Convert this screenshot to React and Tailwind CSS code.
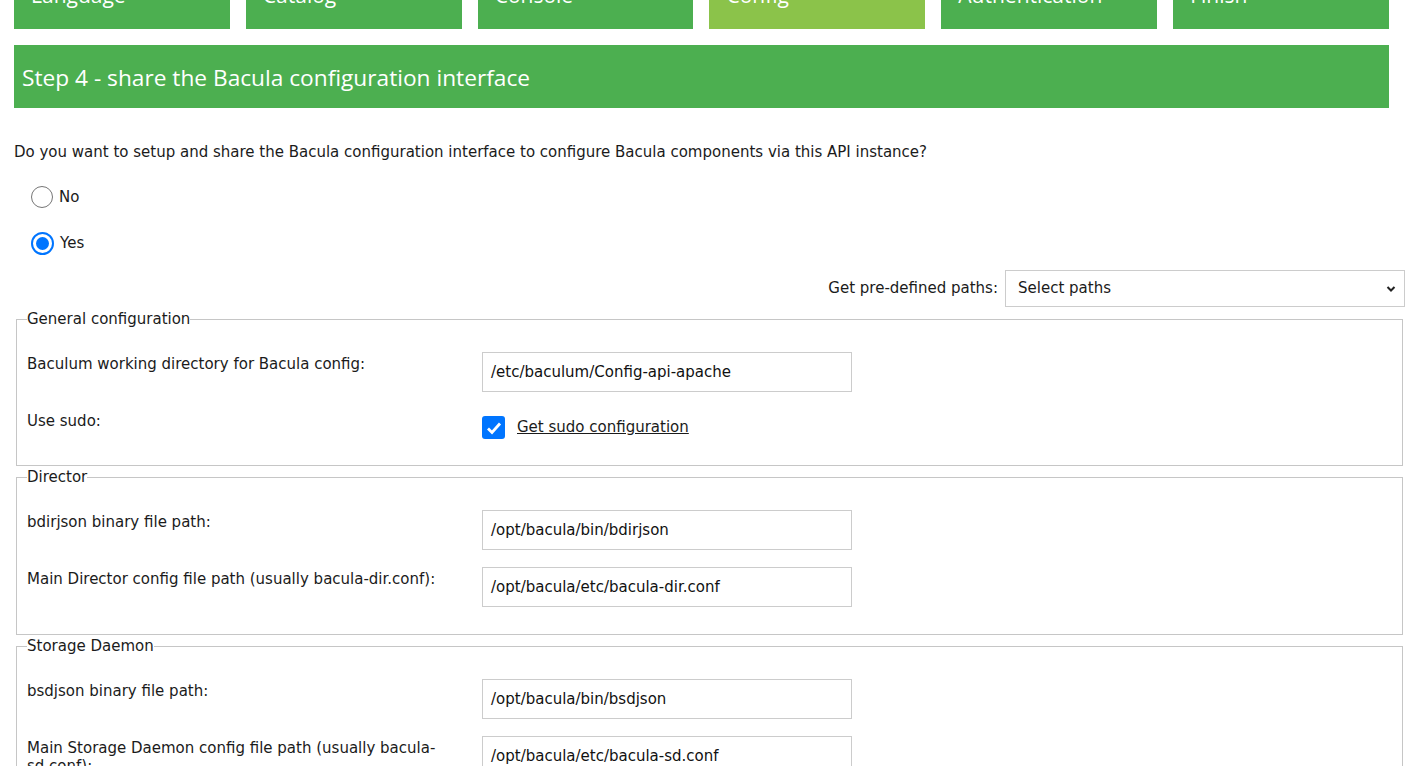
import React from "react";

const tabs = ["Language", "Catalog", "Console", "Config", "Authentication", "Finish"];

function Row({ label, value, children }) {
  return (
    <div className="flex items-start mb-[17px]">
      <div className="w-[455px] pr-[15px] pt-[3px] text-[15px] leading-[18px]">{label}</div>
      {children ? (
        children
      ) : (
        <div className="w-[370px] h-[40px] border border-[#cccccc] px-[8px] flex items-center text-[15px] text-[#111] bg-white">
          {value}
        </div>
      )}
    </div>
  );
}

function Fieldset({ title, children }) {
  return (
    <fieldset className="border border-[#c6c6c6] px-[10px] pb-[10px] mb-[2px]">
      <legend className="px-0 text-[15px] leading-[18px]">{title}</legend>
      <div className="pt-[24px]">{children}</div>
    </fieldset>
  );
}

export default function App() {
  return (
    <div className="min-h-screen bg-white text-[#1b1b1b] font-['DejaVu_Sans',Verdana,sans-serif] overflow-hidden">
      <div className="pl-[14px]">
        <div className="mt-[-31px] flex gap-[16px] w-[1375px]">
          {tabs.map((t, i) => (
            <div
              key={t}
              className={`w-[216px] h-[60px] pl-[17px] pt-[12px] text-white text-[21px] leading-[28px] font-['Open_Sans',sans-serif] ${
                i === 3 ? "bg-[#8bc34a]" : "bg-[#4caf50]"
              }`}
            >
              {t}
            </div>
          ))}
        </div>
        <div className="mt-[16px] w-[1375px] h-[63px] bg-[#4caf50] text-white flex items-center pl-[8px] pt-[3px] text-[22.7px] font-['Open_Sans',sans-serif]">
          Step 4 - share the Bacula configuration interface
        </div>

        <p className="mt-[34px] text-[15px] leading-[20px]">
          Do you want to setup and share the Bacula configuration interface to configure Bacula components via this API instance?
        </p>

        <div className="mt-[24px] pl-[17px] flex flex-col gap-[24px]">
          <label className="flex items-center gap-[6px] h-[22px] text-[15px]">
            <span className="w-[22px] h-[22px] rounded-full border border-[#767676] bg-white"></span>
            <span>No</span>
          </label>
          <label className="flex items-center gap-[6px] h-[22px] text-[15px]">
            <span className="w-[23px] h-[23px] rounded-full border-2 border-[#0075ff] bg-white flex items-center justify-center">
              <span className="w-[13px] h-[13px] rounded-full bg-[#0075ff]"></span>
            </span>
            <span>Yes</span>
          </label>
        </div>

        <div className="mt-[16px] w-[1391px] flex items-center justify-end gap-[7px] text-[15px]">
          <span>Get pre-defined paths:</span>
          <div className="w-[400px] h-[37px] border border-[#cccccc] flex items-center justify-between pl-[12px] pr-[8px] text-[15px] bg-white">
            <span>Select paths</span>
            <svg width="10" height="8" viewBox="0 0 10 8">
              <path d="M1.5 2 L5 5.5 L8.5 2" fill="none" stroke="#222" strokeWidth="2" />
            </svg>
          </div>
        </div>

        <div className="ml-[2px] w-[1387px] mt-[3px]">
          <Fieldset title="General configuration">
            <Row label="Baculum working directory for Bacula config:" value="/etc/baculum/Config-api-apache" />
            <div className="flex items-start mb-[17px] h-[29px]">
              <div className="w-[455px] pt-[3px] text-[15px] leading-[18px]">Use sudo:</div>
              <div className="flex items-center gap-[12px] pt-[7px]">
                <span className="w-[23px] h-[23px] rounded-[3px] bg-[#0075ff] flex items-center justify-center">
                  <svg width="16" height="14" viewBox="0 0 16 14">
                    <path d="M2 7.5 L6 11.5 L14 2.5" fill="none" stroke="white" strokeWidth="2.8" />
                  </svg>
                </span>
                <span className="underline text-[15px]">Get sudo configuration</span>
              </div>
            </div>
          </Fieldset>

          <Fieldset title="Director">
            <Row label="bdirjson binary file path:" value="/opt/bacula/bin/bdirjson" />
            <Row label="Main Director config file path (usually bacula-dir.conf):" value="/opt/bacula/etc/bacula-dir.conf" />
          </Fieldset>

          <Fieldset title="Storage Daemon">
            <Row label="bsdjson binary file path:" value="/opt/bacula/bin/bsdjson" />
            <Row label="Main Storage Daemon config file path (usually bacula-sd.conf):" value="/opt/bacula/etc/bacula-sd.conf" />
          </Fieldset>
        </div>
      </div>
    </div>
  );
}
